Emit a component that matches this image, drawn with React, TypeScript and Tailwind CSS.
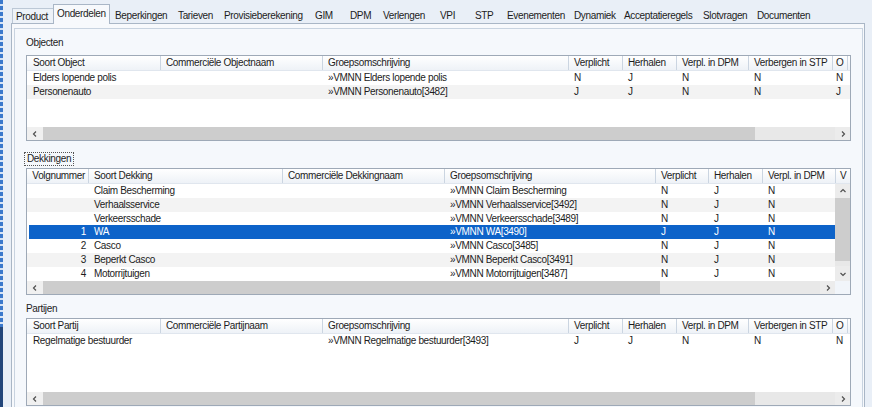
import React from "react";

type Col = { label: string; w: string; right?: boolean };

const Chevron = ({ dir }: { dir: "l" | "r" | "u" | "d" }) => {
  const paths: Record<string, string> = {
    l: "M5 1.5 L2.5 4 L5 6.5",
    r: "M3 1.5 L5.5 4 L3 6.5",
    u: "M1.5 5 L4 2.5 L6.5 5",
    d: "M1.5 3 L4 5.5 L6.5 3",
  };
  return (
    <svg width="8" height="8" viewBox="0 0 8 8">
      <path d={paths[dir]} fill="none" stroke="#505050" strokeWidth="1.2" />
    </svg>
  );
};

const tabs: { label: string; w: string; pl: string }[] = [
  { label: "Product", w: "w-[41px]", pl: "pl-[3px]" },
  { label: "Onderdelen", w: "w-[57px]", pl: "pl-[3px]" },
  { label: "Beperkingen", w: "w-[64px]", pl: "pl-[5px]" },
  { label: "Tarieven", w: "w-[46px]", pl: "pl-[4px]" },
  { label: "Provisieberekening", w: "w-[91px]", pl: "pl-[4px]" },
  { label: "GIM", w: "w-[35px]", pl: "pl-[4px]" },
  { label: "DPM", w: "w-[33px]", pl: "pl-[4px]" },
  { label: "Verlengen", w: "w-[57px]", pl: "pl-[4px]" },
  { label: "VPI", w: "w-[35px]", pl: "pl-[4px]" },
  { label: "STP", w: "w-[32px]", pl: "pl-[4px]" },
  { label: "Evenementen", w: "w-[67px]", pl: "pl-[4px]" },
  { label: "Dynamiek", w: "w-[50px]", pl: "pl-[4px]" },
  { label: "Acceptatieregels", w: "w-[79px]", pl: "pl-[4px]" },
  { label: "Slotvragen", w: "w-[54px]", pl: "pl-[4px]" },
  { label: "Documenten", w: "w-[60px]", pl: "pl-[4px]" },
];

const objCols: Col[] = [
  { label: "Soort Object", w: "w-[134px]" },
  { label: "Commerciële Objectnaam", w: "w-[162px]" },
  { label: "Groepsomschrijving", w: "w-[246px]" },
  { label: "Verplicht", w: "w-[54px]" },
  { label: "Herhalen", w: "w-[54px]" },
  { label: "Verpl. in DPM", w: "w-[72px]" },
  { label: "Verbergen in STP", w: "w-[84px]" },
  { label: "O", w: "w-[15px]" },
];

const partCols: Col[] = [
  { label: "Soort Partij", w: "w-[134px]" },
  { label: "Commerciële Partijnaam", w: "w-[162px]" },
  { label: "Groepsomschrijving", w: "w-[246px]" },
  { label: "Verplicht", w: "w-[54px]" },
  { label: "Herhalen", w: "w-[54px]" },
  { label: "Verpl. in DPM", w: "w-[72px]" },
  { label: "Verbergen in STP", w: "w-[84px]" },
  { label: "O", w: "w-[15px]" },
];

const dekCols: Col[] = [
  { label: "Volgnummer", w: "w-[62px]", right: true },
  { label: "Soort Dekking", w: "w-[194px]" },
  { label: "Commerciële Dekkingnaam", w: "w-[162px]" },
  { label: "Groepsomschrijving", w: "w-[211px]" },
  { label: "Verplicht", w: "w-[53px]" },
  { label: "Herhalen", w: "w-[54px]" },
  { label: "Verpl. in DPM", w: "w-[73px]" },
];

const objRows = [
  ["Elders lopende polis", "", "»VMNN Elders lopende polis", "N", "J", "N", "N", "N"],
  ["Personenauto", "", "»VMNN Personenauto[3482]", "J", "J", "N", "N", "J"],
];

const partRows = [
  ["Regelmatige bestuurder", "", "»VMNN Regelmatige bestuurder[3493]", "J", "J", "N", "N", "N"],
];

const dekRows = [
  ["", "Claim Bescherming", "", "»VMNN Claim Bescherming", "N", "J", "N"],
  ["", "Verhaalsservice", "", "»VMNN Verhaalsservice[3492]", "N", "J", "N"],
  ["", "Verkeersschade", "", "»VMNN Verkeersschade[3489]", "N", "J", "N"],
  ["1", "WA", "", "»VMNN WA[3490]", "J", "J", "N"],
  ["2", "Casco", "", "»VMNN Casco[3485]", "N", "J", "N"],
  ["3", "Beperkt Casco", "", "»VMNN Beperkt Casco[3491]", "N", "J", "N"],
  ["4", "Motorrijtuigen", "", "»VMNN Motorrijtuigen[3487]", "N", "J", "N"],
];

function Header({ cols, tail }: { cols: Col[]; tail?: string }) {
  return (
    <div className="h-[15px] flex overflow-hidden bg-gradient-to-b from-white to-[#eef2f7] border-b border-[#e0e6ee]">
      {cols.map((c, i) => (
        <div
          key={i}
          className={`${c.w} shrink-0 h-full border-r border-[#cbd5e1] whitespace-nowrap overflow-hidden leading-[14px] ${
            c.right ? "text-right pr-[3px]" : i === 0 ? "pl-[6px]" : i === cols.length - 1 && c.label === "O" ? "pl-[3px]" : "pl-[5px]"
          }`}
        >
          {c.label}
        </div>
      ))}
      {tail && <div className="pl-[4px] leading-[14px] whitespace-nowrap">{tail}</div>}
    </div>
  );
}

function Rows({ cols, rows, selected }: { cols: Col[]; rows: string[][]; selected?: number }) {
  return (
    <>
      {rows.map((r, ri) => {
        const sel = ri === selected;
        return (
          <div
            key={ri}
            className={`h-[13.8px] flex leading-[13.8px] whitespace-nowrap ${
              sel ? "bg-[#0d63c9] text-white ml-[2px]" : ri % 2 === 1 ? "bg-[#f3f3f3]" : "bg-white"
            }`}
          >
            {cols.map((c, ci) => (
              <div
                key={ci}
                className={`${c.w} shrink-0 ${
                  c.right ? "text-right pr-[3px]" : ci === 0 ? "pl-[6px]" : ci === cols.length - 1 && c.label === "O" ? "pl-[3px]" : "pl-[5px]"
                } ${sel && ci === 0 ? "-ml-[2px]" : ""}`}
              >
                {r[ci]}
              </div>
            ))}
          </div>
        );
      })}
    </>
  );
}

function HScroll({ thumb, track, corner }: { thumb: string; track: string; corner?: boolean }) {
  return (
    <div className="h-[13px] flex">
      <div className="w-[16px] h-full bg-[#f0f0f0] flex items-center justify-center">
        <Chevron dir="l" />
      </div>
      <div className={`${thumb} h-full bg-[#cdcdcd]`} />
      <div className={`${track} h-full bg-[#e8e8e8]`} />
      <div className="w-[15px] h-full bg-[#ececec] flex items-center justify-center">
        <Chevron dir="r" />
      </div>
      {corner && <div className="w-[15px] h-full bg-[#f1f5fa]" />}
    </div>
  );
}

export default function App() {
  return (
    <div className="w-[872px] h-[407px] overflow-hidden flex bg-[#e9eff7] text-[#1c1c1c] font-['Liberation_Sans',Arial,sans-serif] text-[10px] tracking-[-0.35px]">
      <div className="w-[3px] h-full flex flex-col">
        <div className="flex-1 bg-[repeating-linear-gradient(to_bottom,#3b79cc_0px,#3b79cc_4px,#d7e4f5_4px,#d7e4f5_6px)]" />
        <div className="h-[80px] bg-[#23467a]" />
      </div>
      <div className="flex-1 flex flex-col">
        {/* tab strip */}
        <div className="h-[23px] flex items-end pl-[9px] shrink-0">
          {tabs.map((t, i) => {
            if (i === 1) {
              return (
                <div
                  key={i}
                  className={`${t.w} shrink-0 h-[20px] -mb-[1px] relative z-10 bg-[#f7f9fc] border-l border-t border-r border-[#a9b6c6] pl-[3px] pt-[3px] leading-[12px] whitespace-nowrap`}
                >
                  {t.label}
                </div>
              );
            }
            return (
              <div
                key={i}
                className={`${t.w} ${t.pl} shrink-0 h-[15px] pt-[2px] leading-[12px] whitespace-nowrap ${
                  i === 0 ? "border-l border-t border-[#bcc8d6] bg-[#edf2f8]" : ""
                }`}
              >
                {t.label}
              </div>
            );
          })}
        </div>

        {/* tab page */}
        <div className="ml-[8px] w-[854px] h-[420px] shrink-0 border border-[#a9b6c6] bg-[#f7f9fc] pt-[4px] pl-[2px] pr-[1px]">
          <div className="h-full border border-[#c8d3e0] bg-[#f5f8fc] flex flex-col pl-[11px]">
            {/* Objecten */}
            <div className="h-[26px] pt-[8px] leading-[12px]">Objecten</div>
            <div className="w-[825px] border border-[#9ea9b7] bg-white flex flex-col">
              <Header cols={objCols} />
              <div className="h-[56px] overflow-hidden">
                <Rows cols={objCols} rows={objRows} />
              </div>
              <HScroll thumb="w-[712px]" track="w-[80px]" />
            </div>

            {/* Dekkingen */}
            <div className="h-[27px] pt-[10px]">
              <div className="inline-block -ml-[2px] h-[14px] border border-dotted border-[#555] px-[2px] leading-[12px]">
                Dekkingen
              </div>
            </div>
            <div className="w-[825px] border border-[#9ea9b7] bg-white flex flex-col">
              <Header cols={dekCols} tail="V" />
              <div className="h-[97px] flex">
                <div className="w-[808px] h-full overflow-hidden">
                  <Rows cols={dekCols} rows={dekRows} selected={3} />
                </div>
                <div className="w-[15px] h-full flex flex-col">
                  <div className="h-[14px] bg-[#ececec] flex items-center justify-center">
                    <Chevron dir="u" />
                  </div>
                  <div className="h-[63px] bg-[#cdcdcd]" />
                  <div className="h-[5px] bg-[#e8e8e8]" />
                  <div className="h-[15px] bg-[#ececec] flex items-center justify-center">
                    <Chevron dir="d" />
                  </div>
                </div>
              </div>
              <HScroll thumb="w-[617px]" track="w-[160px]" corner />
            </div>

            {/* Partijen */}
            <div className="h-[23px] pt-[8px] leading-[12px]">Partijen</div>
            <div className="w-[825px] border border-[#9ea9b7] bg-white flex flex-col">
              <Header cols={partCols} />
              <div className="h-[58px] overflow-hidden">
                <Rows cols={partCols} rows={partRows} />
              </div>
              <HScroll thumb="w-[712px]" track="w-[80px]" />
            </div>
          </div>
        </div>
      </div>
    </div>
  );
}
